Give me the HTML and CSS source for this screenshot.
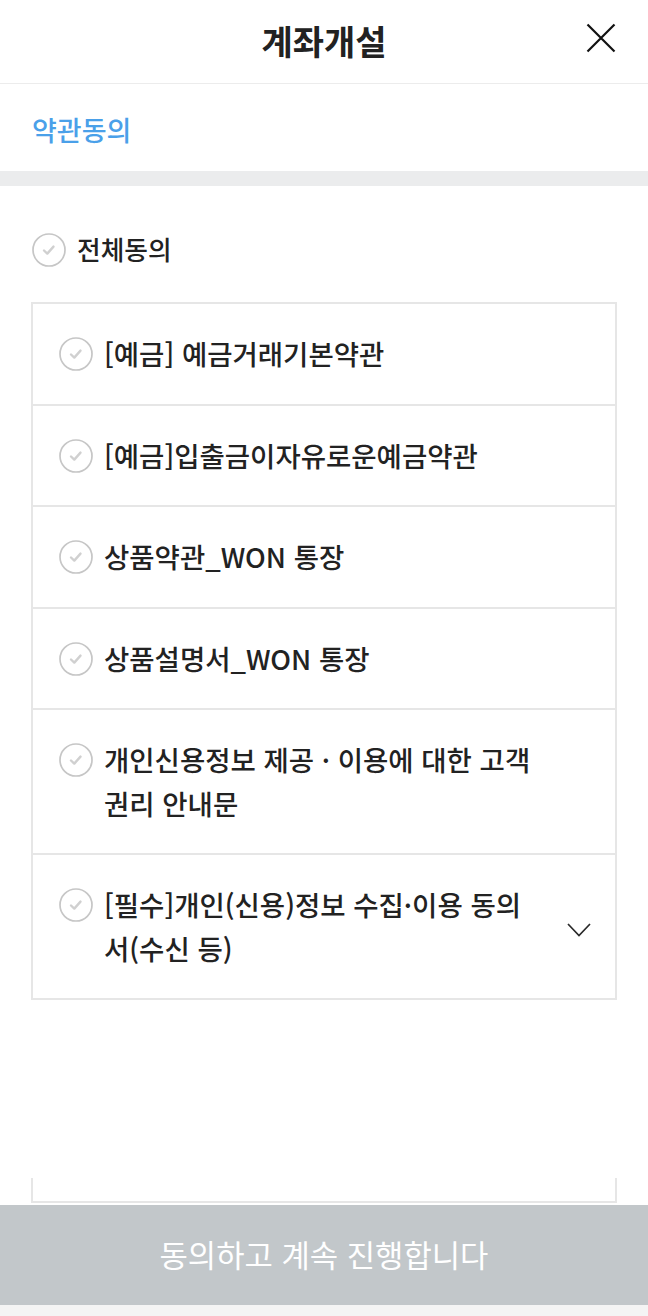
FILE: index.html
```html
<!DOCTYPE html>
<html lang="ko">
<head>
<meta charset="utf-8">
<title>계좌개설</title>
<link rel="stylesheet" href="styles.css">
</head>
<body>
<div class="app">
  <header class="topbar">
    <h1 class="title">계좌개설</h1>
    <button class="close" aria-label="닫기">
      <svg width="30" height="30" viewBox="0 0 30 30"><path d="M1.5 1.5 L28.5 28.5 M28.5 1.5 L1.5 28.5" stroke="#111" stroke-width="2.2" fill="none"/></svg>
    </button>
  </header>
  <div class="section-head">약관동의</div>
  <div class="band"></div>
  <main class="content">
    <div class="all-row">
      <span class="check"><svg viewBox="0 0 34 34"><circle cx="17" cy="17" r="16" fill="#fff" stroke="#c6c6c6" stroke-width="1.7"/><path d="M12 17.5 L15.3 20.6 L21.5 13.6" stroke="#d0d0d0" stroke-width="2.4" fill="none" stroke-linecap="round" stroke-linejoin="round"/></svg></span>
      <span class="all-label">전체동의</span>
    </div>
    <ul class="terms">
      <li class="term">
        <span class="check"><svg viewBox="0 0 34 34"><circle cx="17" cy="17" r="16" fill="#fff" stroke="#c6c6c6" stroke-width="1.7"/><path d="M12 17.5 L15.3 20.6 L21.5 13.6" stroke="#d0d0d0" stroke-width="2.4" fill="none" stroke-linecap="round" stroke-linejoin="round"/></svg></span>
        <span class="term-text">[예금] 예금거래기본약관</span>
        <span class="arrow"></span>
      </li>
      <li class="term">
        <span class="check"><svg viewBox="0 0 34 34"><circle cx="17" cy="17" r="16" fill="#fff" stroke="#c6c6c6" stroke-width="1.7"/><path d="M12 17.5 L15.3 20.6 L21.5 13.6" stroke="#d0d0d0" stroke-width="2.4" fill="none" stroke-linecap="round" stroke-linejoin="round"/></svg></span>
        <span class="term-text">[예금]입출금이자유로운예금약관</span>
        <span class="arrow"></span>
      </li>
      <li class="term">
        <span class="check"><svg viewBox="0 0 34 34"><circle cx="17" cy="17" r="16" fill="#fff" stroke="#c6c6c6" stroke-width="1.7"/><path d="M12 17.5 L15.3 20.6 L21.5 13.6" stroke="#d0d0d0" stroke-width="2.4" fill="none" stroke-linecap="round" stroke-linejoin="round"/></svg></span>
        <span class="term-text">상품약관_WON 통장</span>
        <span class="arrow"></span>
      </li>
      <li class="term">
        <span class="check"><svg viewBox="0 0 34 34"><circle cx="17" cy="17" r="16" fill="#fff" stroke="#c6c6c6" stroke-width="1.7"/><path d="M12 17.5 L15.3 20.6 L21.5 13.6" stroke="#d0d0d0" stroke-width="2.4" fill="none" stroke-linecap="round" stroke-linejoin="round"/></svg></span>
        <span class="term-text">상품설명서_WON 통장</span>
        <span class="arrow"></span>
      </li>
      <li class="term">
        <span class="check"><svg viewBox="0 0 34 34"><circle cx="17" cy="17" r="16" fill="#fff" stroke="#c6c6c6" stroke-width="1.7"/><path d="M12 17.5 L15.3 20.6 L21.5 13.6" stroke="#d0d0d0" stroke-width="2.4" fill="none" stroke-linecap="round" stroke-linejoin="round"/></svg></span>
        <span class="term-text">개인신용정보 제공 · 이용에 대한 고객 권리 안내문</span>
        <span class="arrow"></span>
      </li>
      <li class="term">
        <span class="check"><svg viewBox="0 0 34 34"><circle cx="17" cy="17" r="16" fill="#fff" stroke="#c6c6c6" stroke-width="1.7"/><path d="M12 17.5 L15.3 20.6 L21.5 13.6" stroke="#d0d0d0" stroke-width="2.4" fill="none" stroke-linecap="round" stroke-linejoin="round"/></svg></span>
        <span class="term-text">[필수]개인(신용)정보 수집·이용 동의서(수신 등)</span>
        <span class="arrow"><svg width="24" height="14" viewBox="0 0 24 14"><path d="M1 1 L12 12.5 L23 1" stroke="#2a2a2a" stroke-width="1.7" fill="none"/></svg></span>
      </li>
    </ul>
    <div class="more-box"></div>
  </main>
  <div class="footer">
    <button class="agree-btn">동의하고 계속 진행합니다</button>
    <div class="footer-strip"></div>
  </div>
</div>
</body>
</html>
```

FILE: styles.css
```css
* { box-sizing: border-box; }
html, body { margin: 0; padding: 0; background: #fff; }
body {
  font-family: "Noto Sans CJK KR", "Noto Sans", sans-serif;
  color: #222;
  width: 648px;
  height: 1316px;
  overflow: hidden;
}
.app {
  position: relative;
  height: 1316px;
}
.topbar {
  height: 84px;
  border-bottom: 1px solid #ececec;
  display: flex;
  align-items: center;
  justify-content: center;
  position: relative;
}
.title {
  margin: 0;
  font-size: 34px;
  font-weight: 700;
  color: #222;
  line-height: 1;
  padding-bottom: 2px;
}
.close {
  position: absolute;
  right: 32px;
  top: 23px;
  width: 30px;
  height: 30px;
  padding: 0;
  border: 0;
  background: none;
}
.close svg { display: block; }
.section-head {
  height: 87px;
  padding-left: 32px;
  display: flex;
  align-items: center;
  font-size: 27px;
  font-weight: 500;
  color: #4aa0e9;
  padding-top: 3px;
}
.band {
  height: 15px;
  background: #ebeced;
}
.content {
  padding: 42px 31px 0;
}
.all-row {
  display: flex;
  align-items: center;
  gap: 11px;
  height: 44px;
  margin-bottom: 30px;
}
.all-row .check { margin-left: 1px; }
.check {
  width: 34px;
  height: 34px;
  flex: none;
  display: block;
}
.check svg { display: block; width: 34px; height: 34px; }
.all-label {
  font-size: 25.7px;
  font-weight: 500;
  color: #222;
  padding-bottom: 3px;
}
.terms {
  list-style: none;
  margin: 0;
  padding: 0;
  border: 2px solid #e6e6e6;
}
.term {
  display: grid;
  grid-template-columns: 34px 1fr 24px;
  column-gap: 11px;
  padding: 28px 24px 28px 26px;
  border-bottom: 2px solid #e6e6e6;
}
.term:last-child { border-bottom: 0; padding-bottom: 28px; }
.term .check {
  align-self: start;
  margin-top: 5px;
}
.term-text {
  font-size: 27.5px;
  line-height: 43.5px;
  font-weight: 500;
  color: #222;
  margin-right: 16px;
  word-break: break-all;
}
.arrow {
  align-self: center;
  display: flex;
  justify-content: center;
  padding-top: 6px;
}
.arrow svg { display: block; }
.more-box {
  margin-top: 178px;
  height: 25px;
  border: 2px solid #e6e6e6;
  border-top: 0;
}
.footer {
  position: absolute;
  left: 0;
  right: 0;
  bottom: 0;
}
.agree-btn {
  display: block;
  width: 100%;
  height: 100px;
  border: 0;
  margin: 0;
  background: #c2c7ca;
  color: #fff;
  font-family: "Noto Sans CJK KR", "Noto Sans", sans-serif;
  font-size: 30.8px;
  font-weight: 400;
  padding: 0 0 4px;
}
.footer-strip {
  height: 11px;
  background: #f4f4f4;
}
```
